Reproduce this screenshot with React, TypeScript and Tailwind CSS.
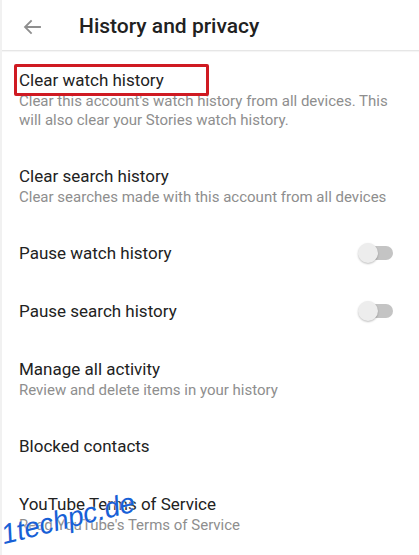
import React from "react";

function Toggle() {
  return (
    <div className="relative w-[36px] h-[22px] shrink-0">
      <div className="absolute left-[5px] top-[4px] w-[30px] h-[14px] rounded-full bg-[#c4c4c4]" />
      <div className="absolute left-0 top-[1px] w-[20px] h-[20px] rounded-full bg-[#ededed] shadow-[0_1px_2px_rgba(0,0,0,0.25)]" />
    </div>
  );
}

type Row = { title: string; sub?: string[]; toggle?: boolean; boxed?: boolean };

const rows: Row[] = [
  {
    title: "Clear watch history",
    sub: ["Clear this account's watch history from all devices. This", "will also clear your Stories watch history."],
    boxed: true,
  },
  { title: "Clear search history", sub: ["Clear searches made with this account from all devices"] },
  { title: "Pause watch history", toggle: true },
  { title: "Pause search history", toggle: true },
  { title: "Manage all activity", sub: ["Review and delete items in your history"] },
  { title: "Blocked contacts" },
  { title: "YouTube Terms of Service", sub: ["Read YouTube's Terms of Service"] },
];

export default function App() {
  return (
    <div
      className="relative w-[419px] h-[555px] overflow-hidden bg-white border-l-2 border-[#f1f1f1]"
      style={{ fontFamily: "Roboto, 'Noto Sans', sans-serif" }}
    >
      <div className="h-[51px] pt-[3px] flex items-center border-b border-[#e6e6e6] shadow-[0_1px_1px_rgba(0,0,0,0.04)]">
        <div className="w-[77px] flex pl-[20px]">
          <svg width="20" height="20" viewBox="0 0 20 20" fill="none">
            <path d="M18 10H3.5M9 4L3 10l6 6" stroke="#8f8f8f" strokeWidth="1.8" strokeLinecap="square" />
          </svg>
        </div>
        <div className="text-[21px] font-medium text-[#212121] leading-none">History and privacy</div>
      </div>
      <div className="flex flex-col">
        {rows.map((r) => (
          <div key={r.title} className="relative flex items-center pl-[17px] pr-[25px] py-[17px]">
            <div className="flex-1 flex flex-col">
              <div className="text-[17px] leading-[24px] text-[#222222]">{r.title}</div>
              {r.sub &&
                r.sub.map((s) => (
                  <div key={s} className="text-[15px] leading-[19px] text-[#8e8e8e]">
                    {s}
                  </div>
                ))}
            </div>
            {r.toggle && <Toggle />}
            {r.boxed && (
              <div className="absolute left-[12px] top-[13px] w-[195px] h-[32px] border-[3px] border-[#cf1a22] rounded-[2px]" />
            )}
          </div>
        ))}
      </div>
      <div
        className="absolute left-[3px] top-[521px] text-[28px] italic text-[#1760d6] leading-none"
        style={{ fontFamily: "'Liberation Sans', sans-serif", transform: "rotate(-14deg)", transformOrigin: "left bottom", textShadow: "0 0 2px #fff" }}
      >
        1techpc.de
      </div>
    </div>
  );
}
